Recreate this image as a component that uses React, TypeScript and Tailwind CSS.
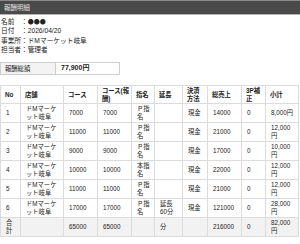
import React from 'react';

interface Row {
    no: string;
    shop: string;
    course: string;
    courseFee: string;
    nomination: string;
    extension: string;
    payment: string;
    sales: string;
    adjust: string;
    subtotal: string;
}

const rows: Row[] = [
    { no: '1', shop: 'ドMマーケット岐阜', course: '7000', courseFee: '7000', nomination: 'Ｐ指名', extension: '', payment: '現金', sales: '14000', adjust: '0', subtotal: '8,000円' },
    { no: '2', shop: 'ドMマーケット岐阜', course: '11000', courseFee: '11000', nomination: 'Ｐ指名', extension: '', payment: '現金', sales: '21000', adjust: '0', subtotal: '12,000円' },
    { no: '3', shop: 'ドMマーケット岐阜', course: '9000', courseFee: '9000', nomination: 'Ｐ指名', extension: '', payment: '現金', sales: '17000', adjust: '0', subtotal: '10,000円' },
    { no: '4', shop: 'ドMマーケット岐阜', course: '10000', courseFee: '10000', nomination: '本指名', extension: '', payment: '現金', sales: '22000', adjust: '0', subtotal: '12,000円' },
    { no: '5', shop: 'ドMマーケット岐阜', course: '11000', courseFee: '11000', nomination: 'Ｐ指名', extension: '', payment: '現金', sales: '21000', adjust: '0', subtotal: '12,000円' },
    { no: '6', shop: 'ドMマーケット岐阜', course: '17000', courseFee: '17000', nomination: 'Ｐ指名', extension: '延長60分', payment: '現金', sales: '121000', adjust: '0', subtotal: '28,000円' },
];

const info = [
    { label: '名前', value: '●●●' },
    { label: '日付', value: '2026/04/20' },
    { label: '事業所', value: 'ドMマーケット岐阜' },
    { label: '担当者', value: '管理者' },
];

const th = 'border border-[#dcdcdc] pl-[4px] pr-0 py-0 text-left align-middle font-bold leading-[8px] h-[18px]';
const td = 'border border-[#dcdcdc] pl-[5px] pr-[3px] py-0 text-left align-middle leading-[8px] h-[19px]';

export default function App() {
    return (
        <div className="w-[300px] h-[244px] overflow-hidden bg-white text-[#222] font-['Liberation_Sans','Noto_Sans_CJK_JP',sans-serif]">
            <div className="h-[15px] bg-[#4a4a4a] border-t border-t-[#8a8a8a] border-b border-b-[#b5b5b5] flex items-center px-[4px]">
                <span className="text-[6.5px] text-[#e2e2e2]">報酬明細</span>
            </div>

            <div className="pt-[2px] pl-[1px]">
                {info.map((item) => (
                    <div key={item.label} className="flex whitespace-nowrap text-[6.7px] leading-[9.3px]">
                        <span className="w-[20px] shrink-0">{item.label}</span>
                        <span>：</span>
                        <span className={item.label === '名前' ? "font-['Noto_Sans_CJK_JP'] text-[6px]" : ''}>{item.value}</span>
                    </div>
                ))}
            </div>

            <div className="mt-[8px] flex w-[120px] h-[13px] border border-[#cfcfcf]">
                <div className="w-[55px] bg-[#f3f3f3] border-r border-r-[#cfcfcf] pl-[4px] flex items-center text-[6.3px]">報酬総額</div>
                <div className="flex-1 pl-[5px] flex items-center text-[7px] font-bold">77,900円</div>
            </div>

            <table className="mt-[10px] w-[298px] table-fixed border-collapse text-[6.3px]">
                <colgroup>
                    <col className="w-[20px]" />
                    <col className="w-[43px]" />
                    <col className="w-[34px]" />
                    <col className="w-[34px]" />
                    <col className="w-[23px]" />
                    <col className="w-[28px]" />
                    <col className="w-[25px]" />
                    <col className="w-[34px]" />
                    <col className="w-[24px]" />
                    <col className="w-[33px]" />
                </colgroup>
                <thead>
                    <tr>
                        <th className={th}>No</th>
                        <th className={th}>店舗</th>
                        <th className={th}>コース</th>
                        <th className={th}>コース(報<br />酬)</th>
                        <th className={th}>指名</th>
                        <th className={th}>延長</th>
                        <th className={th}>決済<br />方法</th>
                        <th className={th}>総売上</th>
                        <th className={th}>3P補<br />正</th>
                        <th className={th}>小計</th>
                    </tr>
                </thead>
                <tbody>
                    {rows.map((r) => (
                        <tr key={r.no}>
                            <td className={td}>{r.no}</td>
                            <td className={td}>{r.shop}</td>
                            <td className={td}>{r.course}</td>
                            <td className={td}>{r.courseFee}</td>
                            <td className={td}>{r.nomination}</td>
                            <td className={td}>{r.extension}</td>
                            <td className={td}>{r.payment}</td>
                            <td className={td}>{r.sales}</td>
                            <td className={td}>{r.adjust}</td>
                            <td className={td}>{r.subtotal}</td>
                        </tr>
                    ))}
                    <tr className="bg-[#f2f2f2]">
                        <td className={td}>合計</td>
                        <td className={td}></td>
                        <td className={td}>65000</td>
                        <td className={td}>65000</td>
                        <td className={td}></td>
                        <td className={td}>分</td>
                        <td className={td}></td>
                        <td className={td}>216000</td>
                        <td className={td}>0</td>
                        <td className={td}>82,000円</td>
                    </tr>
                </tbody>
            </table>
        </div>
    );
}
